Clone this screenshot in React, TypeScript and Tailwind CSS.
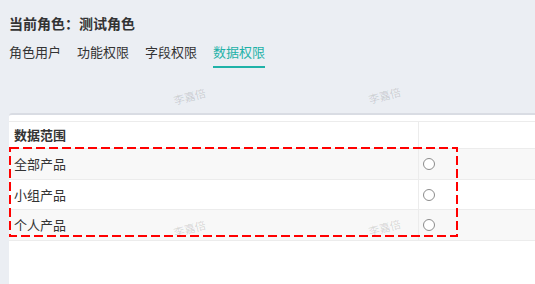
const tabs = ["角色用户", "功能权限", "字段权限", "数据权限"];
const rows = ["全部产品", "小组产品", "个人产品"];
const marks = [
  { left: -33, top: 86 },
  { left: 173, top: 89 },
  { left: 368, top: 88 },
  { left: -33, top: 219 },
  { left: 173, top: 221 },
  { left: 368, top: 220 },
];

export default function App() {
  return (
    <div className="relative w-[535px] h-[284px] overflow-hidden bg-[#ebeef3] text-[#333] font-['Noto_Sans_CJK_SC','Noto_Sans',sans-serif]">
      <div className="flex flex-col h-full">
        <div className="px-[9px] pt-[13px] text-[14px] leading-[20px] font-bold">当前角色：测试角色</div>

        <div className="flex gap-4 px-[9px] mt-[10px]">
          {tabs.map((t, i) => (
            <div
              key={t}
              className={
                i === 3
                  ? "text-[13px] leading-[18px] pb-[5px] text-[#1fb2a8] border-b-2 border-[#1fb2a8]"
                  : "text-[13px] leading-[18px] pb-[5px] border-b-2 border-transparent"
              }
            >
              {t}
            </div>
          ))}
        </div>

        <div className="ml-[9px] mt-[45px] flex-1 bg-white border-t-2 border-[#d9dce3] rounded-tl-[3px] pt-[6px]">
          <div className="border-t border-[#ececec]">
            <div className="flex h-[27px] items-center border-b border-[#ececec]">
              <div className="flex-1 pl-[5px] text-[13px] font-bold">数据范围</div>
              <div className="w-[117px] h-full border-l border-[#ececec]" />
            </div>
            {rows.map((r, i) => (
              <div
                key={r}
                className={
                  i % 2 === 0
                    ? "flex h-[31px] items-center border-b border-[#ececec] bg-[#f8f8f8]"
                    : "flex h-[30px] items-center border-b border-[#ececec] bg-white"
                }
              >
                <div className="flex-1 pl-[5px] text-[13px]">{r}</div>
                <div className="w-[117px] h-full border-l border-[#ececec] flex items-center pl-[4px]">
                  <span className="w-[12px] h-[12px] rounded-full border border-[#8c8c8c] bg-white" />
                </div>
              </div>
            ))}
          </div>
        </div>
      </div>

      <svg className="absolute left-[9px] top-[147px] pointer-events-none" width="449" height="90">
        <rect x="1" y="1" width="447" height="88" fill="none" stroke="#ff0000" strokeWidth="2" strokeDasharray="9 4" />
      </svg>

      {marks.map((m, i) => (
        <div
          key={i}
          className="absolute text-[11px] leading-[14px] text-black/15 -rotate-[15deg] pointer-events-none select-none"
          style={{ left: m.left, top: m.top }}
        >
          李嘉倍
        </div>
      ))}
    </div>
  );
}
